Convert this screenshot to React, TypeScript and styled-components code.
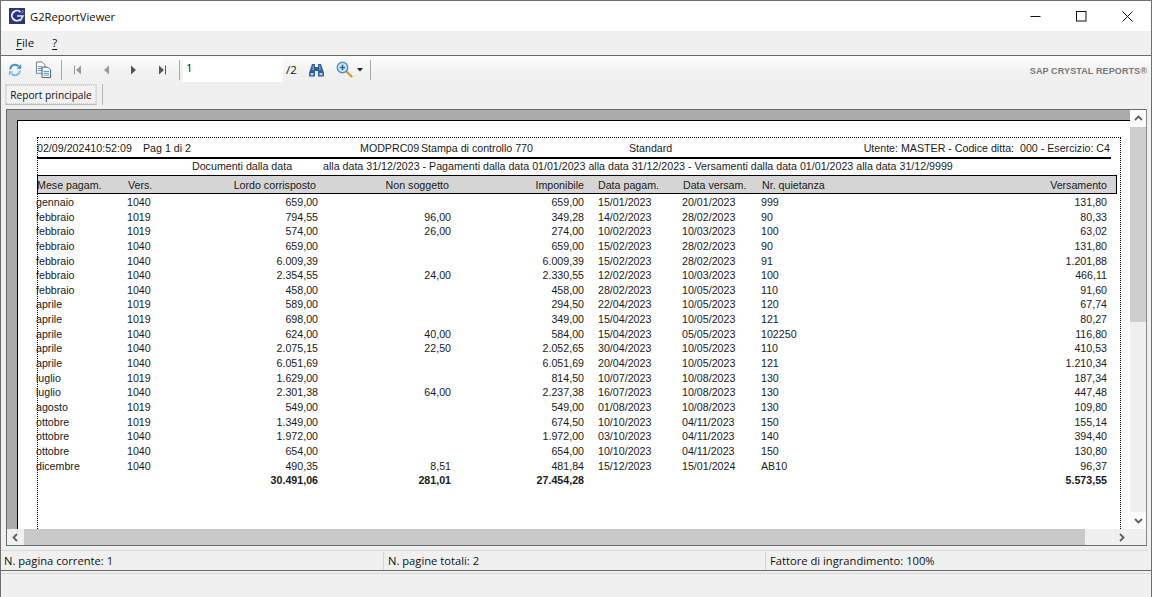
import React from "react";
import styled, { createGlobalStyle } from "styled-components";

const Global = createGlobalStyle`
  html, body { margin: 0; padding: 0; background: #f0f0f0; overflow: hidden; }
  * { box-sizing: border-box; }
`;

const UI = `"Open Sans", "Noto Sans", sans-serif`;
const REPORT = `"Liberation Sans", Arial, sans-serif`;

const Win = styled.div`
  width: 1152px; height: 597px; display: flex; flex-direction: column;
  border: 1px solid #6f6f6f; border-bottom: 0; background: #f0f0f0;
  font-family: ${UI}; color: #111; overflow: hidden;
`;
const TitleBar = styled.div`
  height: 30px; flex: none; background: #fff; display: flex; align-items: center; padding-left: 8px;
`;
const TitleText = styled.span`font-size: 11.2px; margin-left: 5px; color: #111; flex: 1;`;
const WinBtn = styled.div`width: 45px; height: 30px; display: flex; align-items: center; justify-content: center; margin-right: 1px;`;
const MenuBar = styled.div`
  height: 25px; flex: none; display: flex; align-items: center; padding: 0 0 1px 15px; gap: 18px;
  font-size: 11.5px; background: #f0f0f0; border-bottom: 1px solid #696969;
`;
const U = styled.span`text-decoration: underline; text-underline-offset: 2px;`;
const Toolbar = styled.div`
  height: 27px; flex: none; display: flex; align-items: center; position: relative;
  background: linear-gradient(#fdfdfd, #f0f0f0 70%);
`;
const Slot = styled.div<{ $w: number }>`
  width: ${p => p.$w}px; height: 27px; flex: none; display: flex; align-items: center; justify-content: center;
`;
const Sep = styled.div<{ $ml?: number }>`
  width: 1px; height: 20px; background: #a8a8a8; flex: none; margin: 0 3px 0 ${p => p.$ml ?? 3}px;
`;
const PageInput = styled.div`
  width: 100px; height: 24px; flex: none; background: #fff; font-size: 11.5px; padding: 2px 0 0 3px;
`;
const PageTotal = styled.span`font-size: 11.5px; margin-left: 3px; width: 15px; flex: none;`;
const Brand = styled.div`
  margin-left: auto; margin-right: 4px; margin-top: 2px; font: bold 9px ${REPORT}; color: #77787a; letter-spacing: .12px; white-space: nowrap;
`;
const TabStrip = styled.div`
  height: 26px; flex: none; display: flex; align-items: flex-start; padding: 1px 0 0 4px;
`;
const Tab = styled.div`
  width: 92px; height: 21px; font-size: 10.2px; text-align: center; line-height: 20px; white-space: nowrap;
  background: #f2f2f2; border: 1px solid #dadada; border-bottom-color: #bbb; outline: 1px dotted #cfcfcf; outline-offset: -2px;
`;
const TabSep = styled.div`width: 1px; height: 21px; background: #b5b5b5; margin-left: 5px;`;
const Frame = styled.div`
  height: 437px; flex: none; margin: 0 4px 0 5px; border: 1px solid #6a6a6a; border-right-color: #8a8a8a;
  background: #f0f0f0; display: grid; grid-template-columns: 1fr 16px; grid-template-rows: 1fr 16px;
`;
const Gray = styled.div`
  background: #ababab; padding: 10px 0 0 10px; overflow: hidden; min-height: 0; min-width: 0;
`;
const Page = styled.div`
  height: 100%; background: #fff; border-top: 1px solid #000; border-left: 1px solid #000;
  padding: 16px 9px 0 19px; overflow: hidden; font: 10.67px ${REPORT}; color: #1a1a1a;
`;
const Dotted = styled.div`
  height: 500px; border: 1px dotted #000; border-bottom: 0;
`;
const TopLine = styled.div`
  height: 19px; display: grid; grid-template-columns: 106px 217px 61px 208px 1fr auto; align-items: center; white-space: pre; margin-left: -1px; padding-right: 10px;
`;
const Rule = styled.div`height: 2px; background: #000; margin-right: 9px; margin-left: -1px;`;
const Sub = styled.div`
  height: 16px; line-height: 15px; padding-left: 154px; white-space: nowrap; display: flex;
`;
const SubFirst = styled.span`width: 131px; flex: none;`;
const HeadBand = styled.div`
  height: 19px; background: #d5d5d5; border: 1px solid #000; margin: 0 3px 0.7px -1px; display: flex; align-items: center;
`;
const cols = "91px 60px 131px 133px 133px 98px 79px 239px 107px";
const Row = styled.div<{ $bold?: boolean }>`
  display: grid; grid-template-columns: ${cols}; align-items: center; white-space: nowrap;
  height: 14.65px; margin-left: -2px; font-weight: ${p => (p.$bold ? 700 : 400)};
`;
const HeadRow = styled(Row)`width: 100%; height: 17px; margin-left: -1px;`;
const Cell = styled.span<{ $r?: boolean; $p?: number; $rp?: number }>`
  text-align: ${p => (p.$r ? "right" : "left")};
  padding-left: ${p => p.$p ?? 0}px;
  padding-right: ${p => p.$rp ?? 0}px;
`;
const Track = styled.div`background: #f0f0f0; display: flex; flex-direction: column; min-height: 0;`;
const VArrow = styled.div`height: 17px; flex: none; display: flex; align-items: center; justify-content: center; background: #fbfbfb;`;
const VThumb = styled.div`height: 195px; flex: none; background: #cdcdcd;`;
const VRest = styled.div`flex: 1; background: #f0f0f0;`;
const HTrack = styled.div`display: flex; background: #f0f0f0;`;
const HArrow = styled.div`width: 17px; flex: none; display: flex; align-items: center; justify-content: center;`;
const HThumb = styled.div`width: 1061px; flex: none; background: #c9c9c9;`;
const HRest = styled.div`flex: 1; display: flex; justify-content: flex-end;`;
const Corner = styled.div`background: #f0f0f0;`;
const Status = styled.div`
  height: 20px; flex: none; margin-top: 4px; border-top: 1px solid #d9d9d9; display: grid; grid-template-columns: 379px 382px 1fr;
  font-size: 11.2px; line-height: 18px; padding-left: 3px; margin-right: 3px;
`;
const StatusCell = styled.div<{ $first?: boolean }>`
  padding-left: ${p => (p.$first ? 0 : 4)}px; border-left: ${p => (p.$first ? "0" : "1px solid #d4d4d4")}; white-space: nowrap; margin-top: 1px;
`;
const BottomLine = styled.div`height: 4px; flex: none; border-top: 1px solid #696969; border-bottom: 1px solid #d9d9d9;`;

const rows: string[][] = [
  ["gennaio","1040","659,00","","659,00","15/01/2023","20/01/2023","999","131,80"],
  ["febbraio","1019","794,55","96,00","349,28","14/02/2023","28/02/2023","90","80,33"],
  ["febbraio","1019","574,00","26,00","274,00","10/02/2023","10/03/2023","100","63,02"],
  ["febbraio","1040","659,00","","659,00","15/02/2023","28/02/2023","90","131,80"],
  ["febbraio","1040","6.009,39","","6.009,39","15/02/2023","28/02/2023","91","1.201,88"],
  ["febbraio","1040","2.354,55","24,00","2.330,55","12/02/2023","10/03/2023","100","466,11"],
  ["febbraio","1040","458,00","","458,00","28/02/2023","10/05/2023","110","91,60"],
  ["aprile","1019","589,00","","294,50","22/04/2023","10/05/2023","120","67,74"],
  ["aprile","1019","698,00","","349,00","15/04/2023","10/05/2023","121","80,27"],
  ["aprile","1040","624,00","40,00","584,00","15/04/2023","05/05/2023","102250","116,80"],
  ["aprile","1040","2.075,15","22,50","2.052,65","30/04/2023","10/05/2023","110","410,53"],
  ["aprile","1040","6.051,69","","6.051,69","20/04/2023","10/05/2023","121","1.210,34"],
  ["luglio","1019","1.629,00","","814,50","10/07/2023","10/08/2023","130","187,34"],
  ["luglio","1040","2.301,38","64,00","2.237,38","16/07/2023","10/08/2023","130","447,48"],
  ["agosto","1019","549,00","","549,00","01/08/2023","10/08/2023","130","109,80"],
  ["ottobre","1019","1.349,00","","674,50","10/10/2023","04/11/2023","150","155,14"],
  ["ottobre","1040","1.972,00","","1.972,00","03/10/2023","04/11/2023","140","394,40"],
  ["ottobre","1040","654,00","","654,00","10/10/2023","04/11/2023","150","130,80"],
  ["dicembre","1040","490,35","8,51","481,84","15/12/2023","15/01/2024","AB10","96,37"],
  ["","","30.491,06","281,01","27.454,28","","","","5.573,55"],
];
const rightCols = new Set([2, 3, 4, 8]);

const ReportRow = ({ r, bold }: { r: string[]; bold?: boolean }) => (
  <Row $bold={bold}>
    {r.map((c, i) => (
      <Cell key={i} $r={rightCols.has(i)} $p={i === 5 ? 14 : 0}>{c}</Cell>
    ))}
  </Row>
);

const Logo = () => (
  <svg width="16" height="16" viewBox="0 0 16 16">
    <rect width="16" height="16" fill="#2b3580" />
    <path d="M11.5 4.2A5 5 0 1 0 11 11.6" fill="none" stroke="#fff" strokeWidth="1.8" />
    <path d="M8 8h6l-3 5" fill="none" stroke="#dfe6f5" strokeWidth="1.6" />
    <path d="M13 2l1.5 1.5-2 2" fill="none" stroke="#9db3df" strokeWidth="1" />
  </svg>
);
const Refresh = () => (
  <svg width="14" height="14" viewBox="0 0 16 16" fill="none">
    <path d="M2.5 7.5A5.5 5.5 0 0 1 12 3.8" stroke="#3f8fc6" strokeWidth="2.2" />
    <path d="M10 6.5h5V1.5z" fill="#3f8fc6" />
    <path d="M13.5 8.5A5.5 5.5 0 0 1 4 12.2" stroke="#6fc0e4" strokeWidth="2.2" />
    <path d="M6 9.5H1v5z" fill="#6fc0e4" />
  </svg>
);
const CopyDoc = () => (
  <svg width="17" height="17" viewBox="0 0 18 18" fill="none">
    <path d="M1.5 1h6l3 3v9h-9z" fill="#fff" stroke="#6f7780" />
    <path d="M3 6h5M3 8h5M3 10h5" stroke="#3f8fc6" />
    <path d="M7.5 6.5h6l3 3v8h-9z" fill="#fff" stroke="#4b5560" />
    <path d="M9 11h6M9 13h6M9 15h6" stroke="#3f8fc6" />
  </svg>
);
const Nav = ({ dir, bar, color }: { dir: "l" | "r"; bar?: boolean; color: string }) => (
  <svg width="10" height="10" viewBox="0 0 10 10">
    {dir === "l" ? <path d="M8 0.5v9L3 5z" fill={color} /> : <path d="M2 0.5v9L7 5z" fill={color} />}
    {bar && (dir === "l" ? <rect x="1" y="0.5" width="1" height="9" fill={color} /> : <rect x="8" y="0.5" width="1" height="9" fill={color} />)}
  </svg>
);
const Binoculars = () => (
  <svg width="15" height="14" viewBox="0 0 15 14">
    <path d="M3 1h3v3h3V1h3l3 9v3.5H9V8H6v5.5H0V10z" fill="#2f5f95" />
    <path d="M1.5 10h3v2.2h-3zM10.5 10h3v2.2h-3z" fill="#b4d3ee" />
    <path d="M3.8 2.2h1v5h-1.6zM10.2 2.2h1l.6 5h-1.6z" fill="#7fa6cc" />
  </svg>
);
const ZoomIcon = () => (
  <svg width="17" height="17" viewBox="0 0 17 17" fill="none">
    <path d="M10.5 10.5l5 5" stroke="#d9983f" strokeWidth="2.4" strokeLinecap="round" />
    <circle cx="6.5" cy="6.5" r="5.2" fill="#cfe6f6" stroke="#4c8fc2" strokeWidth="1.4" />
    <path d="M3.8 6.5h5.4M6.5 3.8v5.4" stroke="#2b6da6" strokeWidth="1.6" />
  </svg>
);
const Caret = () => (
  <svg width="6" height="4" viewBox="0 0 6 4"><path d="M0 0h6L3 3.5z" fill="#222" /></svg>
);
const Chevron = ({ d }: { d: string }) => (
  <svg width="9" height="9" viewBox="0 0 9 9" fill="none">
    <path d={d} stroke="#5f5f5f" strokeWidth="1.8" />
  </svg>
);

export default function App() {
  return (
    <>
      <Global />
      <Win>
        <TitleBar>
          <Logo />
          <TitleText>G2ReportViewer</TitleText>
          <WinBtn>
            <svg width="11" height="11" viewBox="0 0 11 11"><path d="M0.5 5.5h10" stroke="#111" /></svg>
          </WinBtn>
          <WinBtn>
            <svg width="11" height="11" viewBox="0 0 11 11"><rect x=".5" y=".5" width="9.5" height="9.5" fill="none" stroke="#111" /></svg>
          </WinBtn>
          <WinBtn>
            <svg width="11" height="11" viewBox="0 0 11 11"><path d="M.5.5l10 10M10.5.5l-10 10" stroke="#111" /></svg>
          </WinBtn>
        </TitleBar>
        <MenuBar>
          <span><U>F</U>ile</span>
          <U>?</U>
        </MenuBar>
        <Toolbar>
          <Slot $w={28}><Refresh /></Slot>
          <Slot $w={29}><CopyDoc /></Slot>
          <Sep />
          <Slot $w={25}><Nav dir="l" bar color="#9a9a9a" /></Slot>
          <Slot $w={31}><Nav dir="l" color="#9a9a9a" /></Slot>
          <Slot $w={26}><Nav dir="r" color="#555" /></Slot>
          <Slot $w={29}><Nav dir="r" bar color="#555" /></Slot>
          <Sep />
          <PageInput>1</PageInput>
          <PageTotal>/2</PageTotal>
          <Slot $w={30}><Binoculars /></Slot>
          <Slot $w={26}><ZoomIcon /></Slot>
          <Slot $w={6}><Caret /></Slot>
          <Sep $ml={7} />
          <Brand>SAP CRYSTAL REPORTS®</Brand>
        </Toolbar>
        <TabStrip>
          <Tab>Report principale</Tab>
          <TabSep />
        </TabStrip>
        <Frame>
          <Gray>
            <Page>
              <Dotted>
                <TopLine>
                  <span>02/09/202410:52:09</span>
                  <span>Pag 1 di 2</span>
                  <span>MODPRC09</span>
                  <span>Stampa di controllo 770</span>
                  <span>Standard</span>
                  <span>Utente: MASTER - Codice ditta:  000 - Esercizio: C4</span>
                </TopLine>
                <Rule />
                <Sub>
                  <SubFirst>Documenti dalla data</SubFirst>
                  <span>alla data 31/12/2023 - Pagamenti dalla data 01/01/2023 alla data 31/12/2023 - Versamenti dalla data 01/01/2023 alla data 31/12/9999</span>
                </Sub>
                <HeadBand>
                  <HeadRow>
                    <Cell>Mese pagam.</Cell>
                    <Cell>Vers.</Cell>
                    <Cell $r $rp={3}>Lordo corrisposto</Cell>
                    <Cell $r $rp={3}>Non soggetto</Cell>
                    <Cell $r $rp={1}>Imponibile</Cell>
                    <Cell $p={13}>Data pagam.</Cell>
                    <Cell>Data versam.</Cell>
                    <Cell>Nr. quietanza</Cell>
                    <Cell $r $rp={1}>Versamento</Cell>
                  </HeadRow>
                </HeadBand>
                {rows.map((r, i) => (
                  <ReportRow key={i} r={r} bold={i === rows.length - 1} />
                ))}
              </Dotted>
            </Page>
          </Gray>
          <Track>
            <VArrow><Chevron d="M1 6l3.5-3.5L8 6" /></VArrow>
            <VThumb />
            <VRest />
            <VArrow><Chevron d="M1 3l3.5 3.5L8 3" /></VArrow>
          </Track>
          <HTrack>
            <HArrow><Chevron d="M6 1L2.5 4.5 6 8" /></HArrow>
            <HThumb />
            <HRest><HArrow><Chevron d="M3 1l3.5 3.5L3 8" /></HArrow></HRest>
          </HTrack>
          <Corner />
        </Frame>
        <Status>
          <StatusCell $first>N. pagina corrente: 1</StatusCell>
          <StatusCell>N. pagine totali: 2</StatusCell>
          <StatusCell>Fattore di ingrandimento: 100%</StatusCell>
        </Status>
        <BottomLine />
      </Win>
    </>
  );
}
